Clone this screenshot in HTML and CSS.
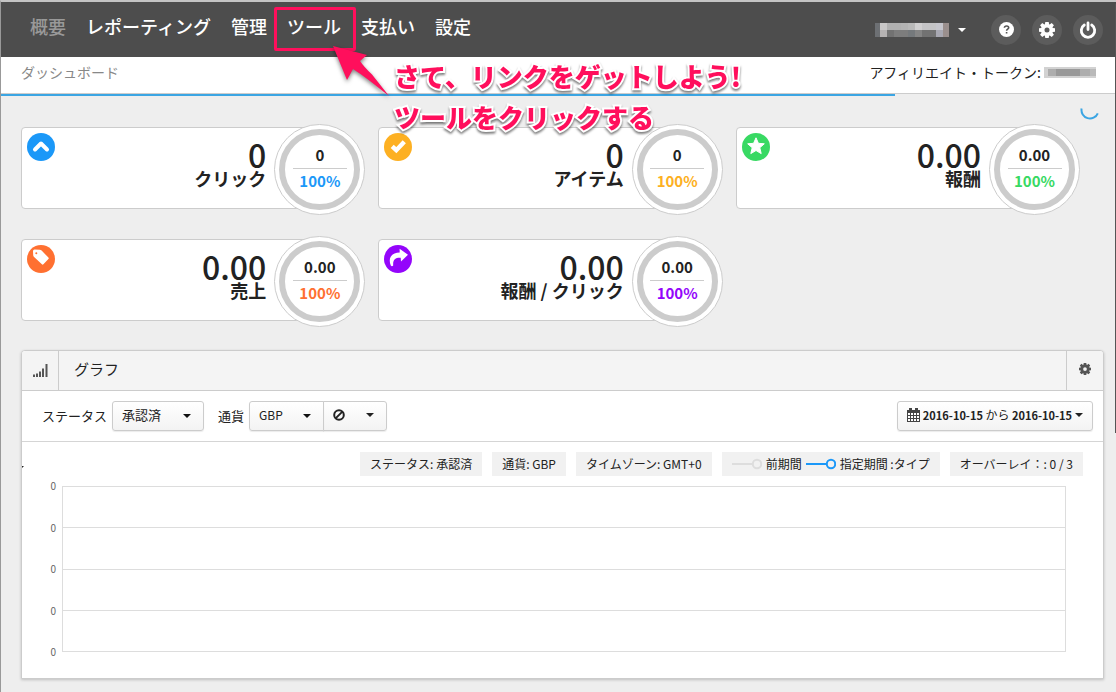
FILE: index.html
```html
<!DOCTYPE html>
<html lang="ja">
<head>
<meta charset="utf-8">
<title>ダッシュボード</title>
<link rel="stylesheet" href="styles.css">
</head>
<body>
<svg class="sprite" aria-hidden="true">
  <symbol id="gear" viewBox="0 0 16 16"><path fill-rule="evenodd" d="M6.300 0h3.400l.4 2.200.6.3L12.700 1.100l2.200 2.200-1.400 2 .3.600L16 6.300v3.400l-2.200.4-.3.600 1.400 2-2.200 2.200-2-1.400-.6.3L9.700 16H6.300l-.4-2.200-.6-.3-2 1.400-2.200-2.200 1.400-2-.3-.6L0 9.700V6.300l2.200-.4.3-.6-1.400-2 2.200-2.200 2 1.400.6-.3zM8 5.500a2.500 2.500 0 1 0 0 5 2.500 2.500 0 0 0 0-5z"/></symbol>
</svg>

<header class="topbar">
  <nav class="nav">
    <a class="nav-link current" href="#">概要</a>
    <a class="nav-link" href="#">レポーティング</a>
    <a class="nav-link" href="#">管理</a>
    <a class="nav-link" href="#">ツール</a>
    <a class="nav-link" href="#">支払い</a>
    <a class="nav-link" href="#">設定</a>
  </nav>
  <button class="account" aria-label="アカウント">
    <svg width="74" height="14" viewBox="0 0 74 14" shape-rendering="crispEdges">
      <path fill="#6d7074" d="M0 0h5v14H0z"/><path fill="#c9c8c8" d="M5 0h7v7H5z"/><path fill="#b5b2b2" d="M5 7h7v7H5z"/>
      <path fill="#b1b1b1" d="M12 0h14v7H12z"/><path fill="#727272" d="M12 7h7v7h-7z"/><path fill="#7d7d7d" d="M19 7h14v7H19z"/>
      <path fill="#b4b4b4" d="M26 0h7v7h-7z"/><path fill="#b9b9b9" d="M33 0h7v7h-7z"/><path fill="#75797c" d="M33 7h7v7h-7z"/>
      <path fill="#d0cfd0" d="M40 0h7v7h-7z"/><path fill="#858585" d="M40 7h7v7h-7z"/><path fill="#c4c4c6" d="M47 0h14v7H47z"/>
      <path fill="#727272" d="M47 7h14v7H47z"/><path fill="#c6c6cd" d="M61 0h7v7h-7z"/><path fill="#a8a8b2" d="M61 7h7v7h-7z"/><path fill="#9a8f8d" d="M68 0h6v14h-6z"/>
    </svg>
    <span class="caret"></span>
  </button>
  <div class="tools">
    <button class="round" aria-label="ヘルプ"><svg width="15" height="15" viewBox="0 0 15 15"><circle cx="7.500" cy="7.500" r="7.500" fill="#fff"/><path d="M5.400 5.800c.1-2.400 4.300-2.400 4.300 0 0 1.400-2.100 1.400-2.100 2.900M7.600 10v1.600" fill="none" stroke="#555" stroke-width="1.600"/></svg></button>
    <button class="round" aria-label="設定"><svg width="16" height="16" fill="#fff"><use href="#gear"/></svg></button>
    <button class="round" aria-label="ログアウト"><svg width="18" height="18" viewBox="0 0 18 18" fill="none" stroke="#fff" stroke-width="2.800" stroke-linecap="round"><path d="M9 2v6.500M5.300 4a6.700 6.700 0 1 0 7.400 0"/></svg></button>
  </div>
</header>

<div class="subbar">
  <span class="crumb">ダッシュボード</span>
  <span class="token">アフィリエイト・トークン:
    <svg width="52" height="11" viewBox="0 0 52 11" shape-rendering="crispEdges"><path fill="#d2d2d2" d="M0 0h52v11H0z"/><path fill="#adadad" d="M4 2h8v7H4zM36 2h10v7H36z"/><path fill="#999" d="M12 2h24v7H12z"/><path fill="#b9b9b9" d="M46 2h6v7h-6z"/></svg>
  </span>
</div>
<div class="progress" role="progressbar" aria-label="読み込み" aria-valuenow="80" aria-valuemin="0" aria-valuemax="100"><div class="progress-fill" style="width:80.200%"></div></div>

<main class="main">
  <svg class="spinner" width="20" height="20" viewBox="0 0 20 20"><path d="M1.600 8.500a8.500 8.500 0 0 0 16.200 4.800" fill="none" stroke="#3ba5e3" stroke-width="2"/></svg>

  <section class="stats">
    <article class="stat blue">
      <div class="stat-box">
        <svg class="badge" viewBox="0 0 28 28"><circle cx="14" cy="14" r="14" fill="currentColor"/><path d="m8 16.500 6-6 6 6" fill="none" stroke="#fff" stroke-width="4" stroke-linecap="round" stroke-linejoin="round"/></svg>
        <div class="figure"><strong class="value">0</strong><span class="name">クリック</span></div>
      </div>
      <div class="dial"><span class="dial-top">0</span><span class="dial-pct">100%</span></div>
    </article>
    <article class="stat amber">
      <div class="stat-box">
        <svg class="badge" viewBox="0 0 28 28"><circle cx="14" cy="14" r="14" fill="currentColor"/><path d="m8.200 13.300 4.100 3.900 8-8.500" fill="none" stroke="#fff" stroke-width="4.400"/></svg>
        <div class="figure"><strong class="value">0</strong><span class="name">アイテム</span></div>
      </div>
      <div class="dial"><span class="dial-top">0</span><span class="dial-pct">100%</span></div>
    </article>
    <article class="stat green">
      <div class="stat-box">
        <svg class="badge" viewBox="0 0 28 28"><circle cx="14" cy="14" r="14" fill="currentColor"/><path d="m14 4.800 2.400 5.500 5.900.5-4.500 3.900 1.400 5.900-5.200-3.100-5.200 3.100 1.400-5.900-4.500-3.900 5.900-.5z" fill="#fff" stroke="#fff" stroke-linejoin="round"/></svg>
        <div class="figure"><strong class="value">0.00</strong><span class="name">報酬</span></div>
      </div>
      <div class="dial"><span class="dial-top">0.00</span><span class="dial-pct">100%</span></div>
    </article>
    <article class="stat orange">
      <div class="stat-box">
        <svg class="badge" viewBox="0 0 28 28"><circle cx="14" cy="14" r="14" fill="currentColor"/><path fill-rule="evenodd" d="M6 6q0-1.500 1.500-1.500l5.300.2q1 0 1.800.8l6.800 7.100q.7.800 0 1.500l-5 5.200q-.8.700-1.500 0l-7.800-7.300q-.8-.8-.9-1.800zM9.300 7.200a1 1 0 1 0 0 2 1 1 0 0 0 0-2z" fill="#fff"/></svg>
        <div class="figure"><strong class="value">0.00</strong><span class="name">売上</span></div>
      </div>
      <div class="dial"><span class="dial-top">0.00</span><span class="dial-pct">100%</span></div>
    </article>
    <article class="stat purple">
      <div class="stat-box">
        <svg class="badge" viewBox="0 0 28 28"><circle cx="14" cy="14" r="14" fill="currentColor"/><path d="M15.600 3.800 24 9.800l-7 6.600-.3-3.600c-5-.3-8 1.500-7.500 7.700-.8 1-1.700.9-2.400.1-3-7.400.6-13 8.900-13z" fill="#fff"/></svg>
        <div class="figure"><strong class="value">0.00</strong><span class="name">報酬 / クリック</span></div>
      </div>
      <div class="dial"><span class="dial-top">0.00</span><span class="dial-pct">100%</span></div>
    </article>
  </section>

  <section class="panel">
    <div class="panel-head">
      <span class="panel-icon"><svg width="15" height="13" viewBox="0 0 15 13" fill="#555"><path d="M0 10.500h2V13H0zM3 9.500h2V13H3zM6 7.500h2V13H6zM9 4.500h2V13H9zM12.500 0h2v13h-2z"/></svg></span>
      <h2 class="panel-title">グラフ</h2>
      <button class="panel-gear" aria-label="グラフ設定"><svg width="12" height="12" fill="#555"><use href="#gear"/></svg></button>
    </div>

    <form class="filters">
      <label class="label" for="status">ステータス</label>
      <span class="select status"><select id="status"><option>承認済</option></select></span>
      <label class="label currency-label" for="currency">通貨</label>
      <span class="group">
        <span class="select currency"><select id="currency"><option>GBP</option></select></span>
        <button type="button" class="drop" aria-label="通貨なし"><svg width="12" height="12" viewBox="0 0 12 12" fill="none" stroke="#222" stroke-width="2"><circle cx="6" cy="6" r="4.800"/><path d="m2.600 9.400 6.800-6.800"/></svg><span class="caret"></span></button>
      </span>
      <button type="button" class="range"><svg width="13" height="14" viewBox="0 0 13 14"><path fill="#444" d="M0 2h13v12H0zM2 0h3v4H2zM8 0h3v4H8z"/><path fill="#fff" d="M1 5h2v2H1zM4 5h2v2H4zM7 5h2v2H7zM10 5h2v2h-2zM1 8h2v2H1zM4 8h2v2H4zM7 8h2v2H7zM10 8h2v2h-2zM1 11h2v2H1zM4 11h2v2H4zM7 11h2v2H7zM10 11h2v2h-2z"/></svg><span>2016-10-15 <span class="to">から</span> 2016-10-15</span><span class="caret"></span></button>
    </form>

    <div class="chips">
      <span class="chip">ステータス: 承認済</span>
      <span class="chip">通貨: GBP</span>
      <span class="chip">タイムゾーン: GMT+0</span>
      <span class="chip legend">
        <svg width="30" height="12" viewBox="0 0 30 12" fill="none" stroke="#ddd" stroke-width="2"><path d="M0 6h20"/><circle cx="25" cy="6" r="4.200"/></svg>
        <span>前期間</span>
        <svg width="30" height="12" viewBox="0 0 30 12" fill="none" stroke="#1b98f8" stroke-width="2"><path d="M0 6h20"/><circle cx="25" cy="6" r="4.200"/></svg>
        <span>指定期間 :タイプ</span>
      </span>
      <span class="chip">オーバーレイ：: 0 / 3</span>
    </div>

    <div class="chart">
      <div class="axis"><span>0</span><span>0</span><span>0</span><span>0</span><span>0</span></div>
      <div class="plot"><div></div><div></div><div></div><div></div></div>
    </div>
  </section>
</main>

<div class="callout-box"></div>
<svg class="callout-arrow" width="64" height="58" viewBox="0 0 64 58"><path d="M3 3 37 12l-7 6q4 6 12 13.500L59 53 40 38q-12-9-17-12l-6 11z" fill="#ff0f5c"/></svg>
<p class="callout-text">さて、リンクをゲットしよう!<br>ツールをクリックする</p>
</body>
</html>
```
FILE: styles.css
```css
* { box-sizing: border-box; }
body {
  position: relative;
  margin: 0;
  min-height: 100vh;
  background: #eee;
  border-left: 1px solid #999;
  border-top: 2px solid #c4c4c4;
  color: #222;
  font: 12px/1.5 "Noto Sans CJK JP", sans-serif;
}
/* scroll thumb at the window edge */
body::after {
  content: "";
  position: absolute;
  top: 2px;
  right: 0;
  width: 1px;
  height: 429px;
  background: #555;
}
button, select { font: inherit; color: inherit; cursor: pointer; }
button { padding: 0; border: 0; background: none; }
svg { display: block; flex: none; }
.sprite { position: absolute; width: 0; height: 0; }

.caret {
  width: 0;
  height: 0;
  border: solid transparent;
  border-width: 4px 4px 0;
  border-top-color: currentColor;
}

.topbar {
  display: flex;
  align-items: center;
  height: 55px;
  padding: 0 13px 0 29px;
  background: #4d4d4d;
  color: #fff;
}
.nav { display: flex; gap: 20px; flex: 1; padding-bottom: 7px; }
.nav-link { color: #fff; font-size: 18px; font-weight: 500; line-height: 24px; text-decoration: none; }
.nav-link.current { color: #999; }
.account { display: flex; align-items: center; gap: 9px; margin-right: 25px; }
.tools { display: flex; gap: 11px; }
.round {
  display: grid;
  place-items: center;
  width: 30px;
  height: 30px;
  border-radius: 50%;
  background: #5c5c5c;
}

.subbar {
  display: flex;
  justify-content: space-between;
  align-items: center;
  height: 37px;
  padding: 0 20px 5px;
  background: #fff;
  border-bottom: 1px solid #ccc;
  font-size: 14px;
}
.crumb { color: #888; }
.token { display: flex; align-items: center; gap: 3px; }
.progress-fill { height: 2px; background: #3ba5e3; }

.main { position: relative; padding: 28px 12px 13px 20px; }
.spinner { position: absolute; top: 4px; right: 16px; }

.stats {
  display: grid;
  grid-template-columns: repeat(3, 1fr);
  gap: 21px 13px;
  padding-right: 24px;
}
.stat { display: flex; align-items: flex-start; }
.blue { color: #1b98f8; }
.amber { color: #fdb022; }
.green { color: #38d963; }
.orange { color: #ff7031; }
.purple { color: #9405fb; }
.stat-box {
  display: flex;
  justify-content: space-between;
  flex: 1;
  height: 82px;
  margin: 3px -45px 0 0;
  padding: 5px 52px 0 5px;
  background: #fff;
  border: 1px solid #ccc;
  border-radius: 4px;
}
.badge { width: 28px; height: 28px; }
.figure { display: flex; flex-direction: column; align-items: flex-end; padding-top: 7px; color: #222; }
.value { font-size: 32px; font-weight: 500; line-height: 28px; }
.name { font-size: 18px; font-weight: 700; line-height: 20px; }
.dial {
  display: flex;
  flex-direction: column;
  align-items: center;
  position: relative;
  width: 91px;
  height: 91px;
  padding-top: 18px;
  border: 1px solid #ccc;
  border-radius: 50%;
  background: #fff;
  font-size: 15px;
  font-weight: 700;
  line-height: 24px;
}
.dial::before {
  content: "";
  position: absolute;
  inset: 4px;
  border: 6px solid #ccc;
  border-radius: 50%;
}
.dial-top { width: 54px; height: 26px; border-bottom: 1px solid #ccc; color: #222; text-align: center; }

.panel {
  position: relative;
  margin-top: 23px;
  background: #fff;
  border: 1px solid #ccc;
  border-radius: 4px 4px 0 0;
  box-shadow: 0 1px 3px rgba(0, 0, 0, .2);
}
.panel-head {
  display: flex;
  height: 40px;
  background: #f4f4f4;
  border-bottom: 1px solid #ccc;
  border-radius: 3px 3px 0 0;
}
.panel-icon, .panel-gear { display: grid; place-items: center; width: 37px; }
.panel-icon { border-right: 1px solid #ccc; }
.panel-gear { border-left: 1px solid #ccc; padding-bottom: 3px; }
.panel-title { flex: 1; margin: 0; padding-left: 15px; font-size: 15px; font-weight: 400; line-height: 36px; }

.filters {
  display: flex;
  align-items: center;
  height: 51px;
  padding: 0 10px 0 20px;
  border-bottom: 1px solid #d5d5d5;
}
.label { margin-right: 5px; font-size: 13px; }
.currency-label { margin-left: 14px; }
.select { position: relative; display: flex; }
.select::after {
  content: "";
  position: absolute;
  top: 13px;
  right: 13px;
  border: solid transparent;
  border-width: 4px 4px 0;
  border-top-color: #111;
  pointer-events: none;
}
.select select, .drop, .range {
  height: 30px;
  border: 1px solid #ccc;
  border-radius: 3px;
  background: linear-gradient(#fff, #f3f3f3);
  box-shadow: 0 1px 1px rgba(0, 0, 0, .08);
}
.select select { width: 100%; padding: 0 24px 2px 9px; appearance: none; }
.status { width: 92px; font-size: 13px; }
.currency { width: 75px; }
.group { display: flex; }
.group select { border-radius: 3px 0 0 3px; }
.drop {
  display: flex;
  align-items: center;
  justify-content: space-between;
  width: 64px;
  margin-left: -1px;
  padding: 0 12px 2px 9px;
  border-radius: 0 3px 3px 0;
}
.range {
  display: flex;
  align-items: center;
  gap: 3px;
  margin-left: auto;
  padding: 0 9px 2px;
  font-size: 11px;
  font-weight: 700;
}
.to { font-size: 12px; font-weight: 400; }

.chips { display: flex; justify-content: flex-end; gap: 10px; padding: 10px 20px; }
.chip { padding: 0 10px; background: #f1f1f1; line-height: 24px; white-space: nowrap; }
.legend { display: flex; align-items: center; gap: 4px; }
/* clipped axis marker on the panel edge */
.panel::before {
  content: "";
  position: absolute;
  top: 115px;
  left: 0;
  border: solid transparent;
  border-width: 2px 2px 0 0;
  border-top-color: #222;
}

.chart { display: flex; padding: 0 37px 26px 0; }
.axis {
  display: flex;
  flex-direction: column;
  justify-content: space-between;
  width: 40px;
  padding-right: 6px;
  color: #666;
  font-size: 10px;
  line-height: 0;
  text-align: right;
}
.plot { display: grid; grid-template-rows: repeat(4, 1fr); flex: 1; height: 166px; border: solid #ddd; border-width: 0 1px 1px; }
.plot div { border-top: 1px solid #ddd; }

.callout-box {
  position: absolute;
  top: 5px;
  left: 273px;
  width: 82px;
  height: 44px;
  border: 3px solid #ff0f5c;
  border-radius: 2px;
}
.callout-arrow { position: absolute; top: 41px; left: 329px; filter: drop-shadow(0 2px 2px rgba(0, 0, 0, .5)); }
.callout-text {
  position: absolute;
  top: 53px;
  left: 393px;
  margin: 0;
  color: #ff0f5c;
  font-size: 26px;
  font-weight: 900;
  line-height: 41px;
  white-space: nowrap;
  -webkit-text-stroke: 4px #fff;
  paint-order: stroke fill;
  filter: drop-shadow(0 2px 1px rgba(0, 0, 0, .5));
}
```
